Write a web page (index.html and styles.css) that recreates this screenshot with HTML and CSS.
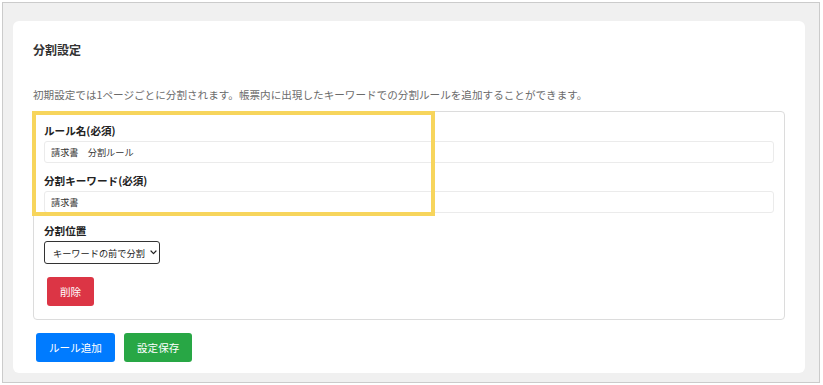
FILE: index.html
```html
<!DOCTYPE html>
<html>
<head>
    <meta charset="UTF-8">
    <meta name="viewport" content="width=device-width, initial-scale=1.0">
    <title>分割設定</title>
    <link rel="stylesheet" href="styles.css">
</head>
<body>
    <div class="frame">
        <div class="card">
            <h2 class="card-title">分割設定</h2>
            <p class="description">初期設定では1ページごとに分割されます。帳票内に出現したキーワードでの分割ルールを追加することができます。</p>
            <div class="rule-box">
                <div class="highlight"></div>
                <div class="field">
                    <label class="field-label">ルール名(必須)</label>
                    <input class="text-input" type="text" value="請求書　分割ルール">
                </div>
                <div class="field">
                    <label class="field-label">分割キーワード(必須)</label>
                    <input class="text-input" type="text" value="請求書">
                </div>
                <div class="field">
                    <label class="field-label">分割位置</label>
                    <div class="select-wrap">
                        <select class="select">
                            <option>キーワードの前で分割</option>
                            <option>キーワードの後で分割</option>
                        </select>
                        <svg class="chevron" width="7" height="5" viewBox="0 0 7 5">
                            <path d="M1 1 L3.5 3.6 L6 1" fill="none" stroke="#222" stroke-width="1.2" stroke-linecap="round" stroke-linejoin="round"/>
                        </svg>
                    </div>
                </div>
                <button class="btn btn-red delete">削除</button>
            </div>
            <div class="actions">
                <button class="btn btn-blue">ルール追加</button>
                <button class="btn btn-green">設定保存</button>
            </div>
        </div>
    </div>
</body>
</html>
```

FILE: styles.css
```css
body {
    margin: 0;
    font-family: "Noto Sans CJK JP", "Noto Sans", sans-serif;
    color: #222;
}
.frame {
    width: 818px;
    height: 381px;
    box-sizing: border-box;
    margin: 2px;
    border: 1px solid #cbcbcb;
    background: #f0f0f0;
    padding: 18px 14px 7px 10px;
}
.card {
    display: flex;
    flex-direction: column;
    align-items: flex-start;
    background: #fff;
    border-radius: 6px;
    padding: 21px 20px 11px 20px;
}
.card-title {
    margin: 0;
    font-size: 12px;
    line-height: 16px;
    font-weight: bold;
    color: #333;
}
.description {
    margin: 29px 0 8px 0;
    font-size: 10.6px;
    line-height: 16px;
    color: #6b6b6b;
}
.rule-box {
    position: relative;
    align-self: stretch;
    display: flex;
    flex-direction: column;
    align-items: flex-start;
    border: 1px solid #dcdcdc;
    border-radius: 4px;
    padding: 11px 10px 13px 10px;
}
.highlight {
    position: absolute;
    left: -2px;
    top: -1px;
    width: 403px;
    height: 105px;
    box-sizing: border-box;
    border: 4px solid #f7d55c;
    pointer-events: none;
}
.field {
    align-self: stretch;
    display: flex;
    flex-direction: column;
    align-items: flex-start;
    margin-bottom: 10px;
}
.field:first-of-type {
    margin-bottom: 11px;
}
.field-label {
    font-size: 10.6px;
    line-height: 16px;
    font-weight: bold;
    margin-bottom: 2px;
}
.text-input {
    align-self: stretch;
    height: 22px;
    box-sizing: border-box;
    border: 1px solid #ebebeb;
    border-radius: 3px;
    padding: 0 6px;
    font-family: inherit;
    font-size: 9.2px;
    color: #333;
    outline: none;
}
.select-wrap {
    position: relative;
}
.select {
    display: block;
    width: 116px;
    height: 23px;
    box-sizing: border-box;
    border: 1px solid #333;
    border-radius: 3px;
    background: #fff;
    padding: 0 8px 0 8px;
    font-family: inherit;
    font-size: 9.2px;
    color: #222;
    appearance: none;
    -webkit-appearance: none;
}
.chevron {
    position: absolute;
    right: 3px;
    top: 9px;
    pointer-events: none;
}
.btn {
    height: 29px;
    padding: 0 13px;
    border: none;
    border-radius: 3px;
    font-family: inherit;
    font-size: 10.6px;
    color: #fff;
    cursor: pointer;
}
.btn-red {
    background: #dc3545;
}
.btn-blue {
    background: #007bff;
}
.btn-green {
    background: #28a745;
}
.delete {
    margin: 3px 0 0 3px;
}
.actions {
    display: flex;
    gap: 9px;
    margin: 13px 0 0 3px;
}
```
